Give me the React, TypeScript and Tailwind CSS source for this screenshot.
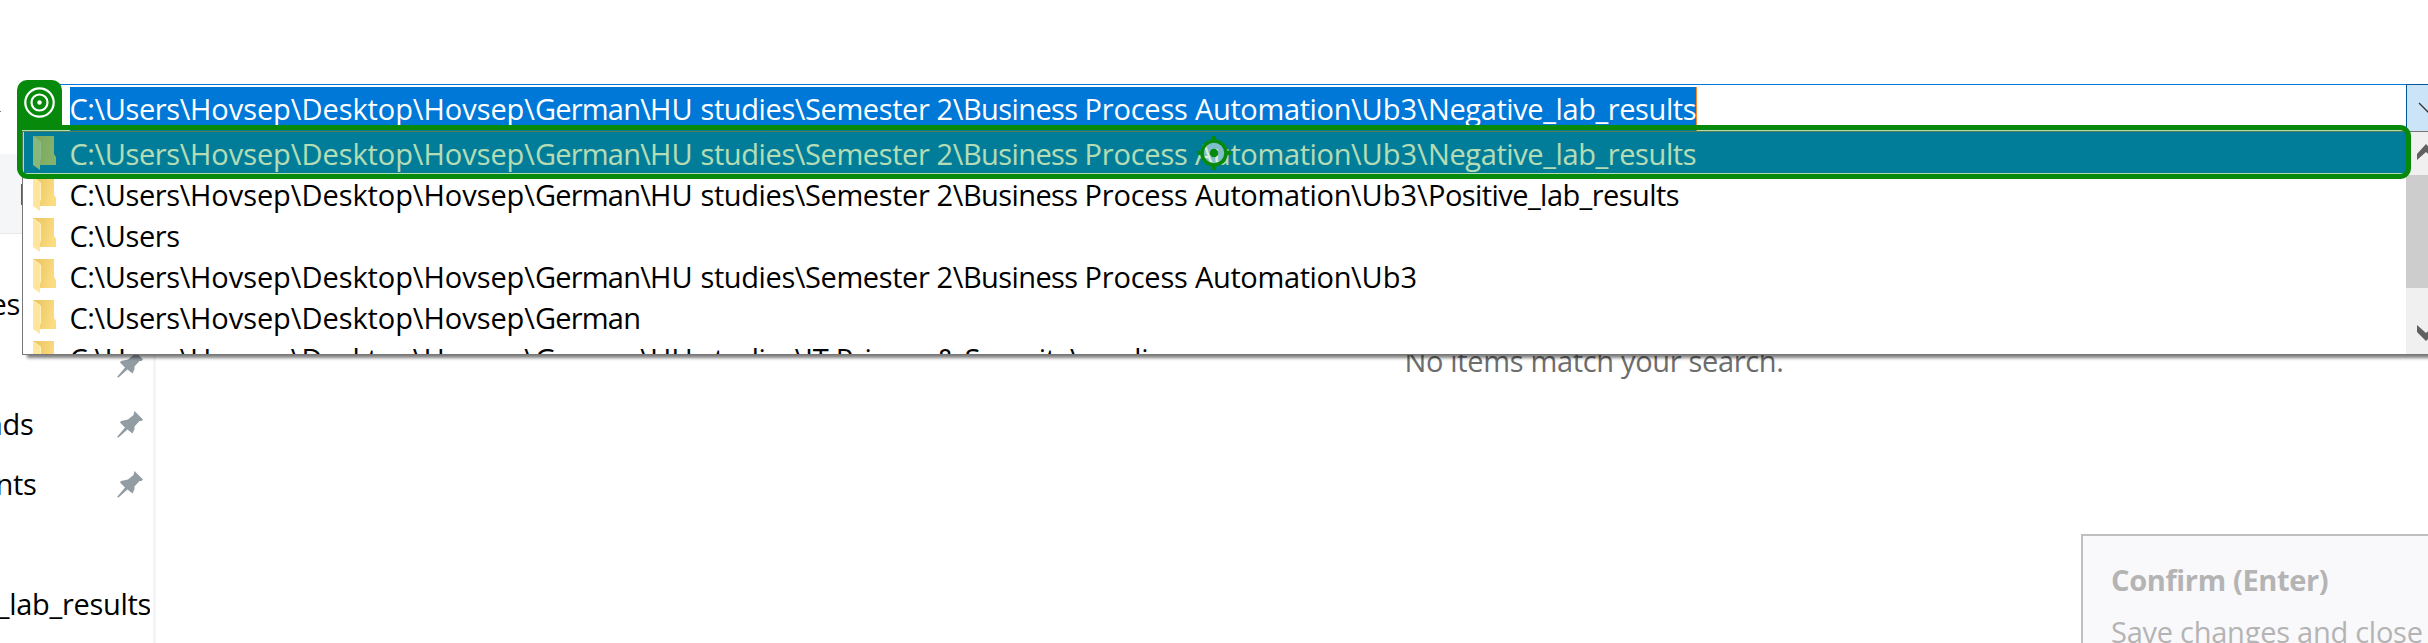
import React from "react";

type Part = [string, string];

const BASE: Part[] = [
  ["C:\\Users\\", "w-[120.5px] tracking-[-0.41px]"],
  ["Hovsep\\", "w-[111.5px] tracking-[-0.06px]"],
  ["Desktop\\", "w-[122px] tracking-[-0.08px]"],
  ["Hovsep\\", "w-[111.5px] tracking-[-0.06px]"],
];
const UNI: Part[] = [
  ...BASE,
  ["German\\", "w-[115px] tracking-[-0.8px]"],
  ["HU ", "w-[50.5px] tracking-[0.1px]"],
  ["studies\\", "w-[104.5px] tracking-[-0.4px]"],
];
const PROJECT: Part[] = [
  ...UNI,
  ["Semester ", "w-[131.5px] tracking-[-0.4px]"],
  ["2\\", "w-[26.5px] tracking-[-0.35px]"],
  ["Business ", "w-[121.5px] tracking-[-0.61px]"],
  ["Process ", "w-[110.5px] tracking-[-0.2px]"],
  ["Automation\\", "w-[166.5px] tracking-[-0.37px]"],
];
const NEGATIVE: Part[] = [
  ...PROJECT,
  ["Ub3\\", "w-[66.5px] tracking-[0px]"],
  ["Negative_lab_results", "tracking-[-0.4px]"],
];

const history: Part[][] = [
  NEGATIVE,
  [...PROJECT, ["Ub3\\", "w-[66.5px] tracking-[0px]"], ["Positive_lab_results", "tracking-[-0.56px]"]],
  [["C:\\Users", "tracking-[-0.41px]"]],
  [...PROJECT, ["Ub3", "tracking-[0px]"]],
  [...BASE, ["German", "tracking-[-0.8px]"]],
  [...UNI, ["IT Privacy & Security\\reading", "tracking-[-0.3px]"]],
];

function Path({ parts }: { parts: Part[] }) {
  return (
    <div className="flex">
      {parts.map(([text, cls], i) => (
        <span key={i} className={"shrink-0 " + cls}>
          {text}
        </span>
      ))}
    </div>
  );
}

function Folder() {
  return (
    <svg width="26" height="36" viewBox="0 0 26 36" className="shrink-0">
      <defs>
        <linearGradient id="back" x1="0" y1="0" x2="1" y2="0.3">
          <stop offset="0" stopColor="#e9c35f" />
          <stop offset="1" stopColor="#fbdc80" />
        </linearGradient>
      </defs>
      <path d="M0 0H21V18L23 21V29H7L0 20Z" fill="url(#back)" />
      <path d="M0 0L8 6V23L7 25V34L0 29Z" fill="#ffe69c" />
      <path d="M1 1L7.500 6V23" fill="none" stroke="#fff0bd" strokeWidth="1" />
    </svg>
  );
}

function Pin() {
  return (
    <svg width="26" height="27" viewBox="0 0 26 27" className="shrink-0">
      <path
        d="M17.500 0L26 8.500L24.500 10L22.500 10L17.500 15.500L17.500 18L15.500 22.500L10.500 18.500L1.500 26.500L0 26L8 16.500L3 11.500L4 10L11 8.500L16.500 4Z"
        fill="#929ca3"
      />
    </svg>
  );
}

function Row({ parts, active }: { parts: Part[]; active?: boolean }) {
  return (
    <div className={"flex h-[41px] shrink-0 " + (active ? "bg-[#0078d7] text-white" : "text-black")}>
      <div className={"w-[45.5px] shrink-0 pl-[9px] pt-1 " + (active ? "opacity-75" : "")}>
        <Folder />
      </div>
      <div className="pt-px leading-[41px]">
        <Path parts={parts} />
      </div>
    </div>
  );
}

export default function App() {
  return (
    <div className="relative flex h-[643px] w-[2428px] flex-col overflow-hidden whitespace-pre bg-white font-['Open_Sans','Noto_Sans',sans-serif] text-[29px] text-black">
      <div className="h-[84px] shrink-0" />

      <div className="flex h-12 shrink-0">
        <div className="w-[22px] shrink-0 pt-[27px]">
          <div className="h-px w-px bg-[#777]" />
        </div>
        <div className="flex flex-1 border-t border-[#0078d7] pl-12 pt-0.5">
          <div className="h-[45px] w-[1627px] shrink-0 border-r border-[#ff8728] bg-[#0078d7] leading-[44px] text-white">
            <div className="-ml-[0.5px]">
              <Path parts={NEGATIVE} />
            </div>
          </div>
        </div>
        <div className="h-12 w-[22px] shrink-0 overflow-hidden border-y border-l border-[#005499] bg-[#cce4f7]">
          <svg width="30" height="46" viewBox="0 0 30 46">
            <path d="M12 18L21.500 27.500L31 18" fill="none" stroke="#333" strokeWidth="1.300" />
          </svg>
        </div>
      </div>

      <div className="h-[22px] shrink-0" />
      <div className="flex h-20 shrink-0 border-b border-[#e8e8e9] bg-[#f5f6f7] pl-[21px] pt-[30px]">
        <div className="h-[21px] w-px bg-[#7a5340]" />
      </div>

      <div className="flex flex-1">
        <div className="w-[153px] shrink-0">
          <div className="flex h-[100px] w-[20px] justify-end pt-10 leading-[60px] tracking-[-0.3px]">es</div>
          <div className="flex h-[60px] items-center justify-end pr-[10px]">
            <Pin />
          </div>
          {[
            ["nds", "w-[33.5px]"],
            ["nts", "w-[36.5px]"],
          ].map(([t, w]) => (
            <div key={t} className="flex h-[60px] items-center justify-between pr-[10px]">
              <div className={"flex justify-end leading-[60px] tracking-[-0.3px] " + w}>{t}</div>
              <Pin />
            </div>
          ))}
          <div className="h-[60px]" />
          <div className="flex h-[60px] w-[150px] justify-end overflow-hidden leading-[60px] tracking-[-0.3px]">
            <span className="-mr-px">e_lab_results</span>
          </div>
        </div>
        <div className="w-[3px] shrink-0 bg-[#f5f5f5]" />
        <div className="flex flex-1 justify-between">
          <div className="pl-[1248.5px] pt-[107px] leading-[40px] tracking-[-0.33px] text-[#6d6d6d]">
            No items match your search.
          </div>
          <div className="mt-[300px] w-[347px] shrink-0 border-l-2 border-t-2 border-[#bfbfbf] bg-[#f9f9fb] pl-7 pt-6 text-[#b4b4b4]">
            <div className="font-bold leading-[40px] tracking-[-0.35px]">Confirm (Enter)</div>
            <div className="pt-3 leading-[40px] tracking-[-0.25px]">Save changes and close</div>
          </div>
        </div>
      </div>

      <div className="absolute left-[22px] top-[131px] flex h-[224px] w-[2420px] border border-[#777] bg-white shadow-[5px_3px_3px_rgba(0,0,0,0.5)]">
        <div className="flex w-[2383px] shrink-0 flex-col overflow-hidden pl-px">
          {history.map((parts, i) => (
            <Row key={i} parts={parts} active={i === 0} />
          ))}
        </div>
        <div className="flex w-[34px] shrink-0 flex-col bg-[#f0f0f0]">
          <svg width="34" height="43" viewBox="0 0 34 43">
            <path d="M11 28V22L20 12L29 22V28L20 20Z" fill="#606060" />
          </svg>
          <div className="h-[113px] bg-[#cdcdcd]" />
          <svg width="34" height="66" viewBox="0 0 34 66">
            <path d="M11 37V44L20 53L29 44V37L20 45Z" fill="#606060" />
          </svg>
        </div>
      </div>

      <div className="absolute left-[17px] top-[80px] h-[50px] w-[45px] rounded-t-[10px] bg-[#078a0b] pl-[7px] pt-[7px]">
        <svg width="31" height="31" viewBox="0 0 31 31" fill="none" stroke="#fff" strokeWidth="2.200">
          <circle cx="15.500" cy="15.500" r="14.200" />
          <circle cx="15.500" cy="15.500" r="8" />
          <circle cx="15.500" cy="15.500" r="2.200" fill="#fff" stroke="none" />
        </svg>
      </div>
      <div className="absolute left-[17px] top-[125px] flex h-[54px] w-[2394px] items-center justify-center rounded-b-[11px] rounded-tr-[11px] border-[5px] border-[#078a0b] bg-[#078a0b]/30">
        <svg width="34" height="36" viewBox="0 0 34 36" className="mt-px">
          <circle cx="17" cy="18" r="12" fill="#fff" fillOpacity="0.500" stroke="#078a0b" strokeWidth="3.600" />
          <circle cx="17" cy="18" r="4.300" fill="#078a0b" />
          <path d="M17 1V6M17 30V35M0 18H5M29 18H34" stroke="#078a0b" strokeWidth="4" />
        </svg>
      </div>
    </div>
  );
}
